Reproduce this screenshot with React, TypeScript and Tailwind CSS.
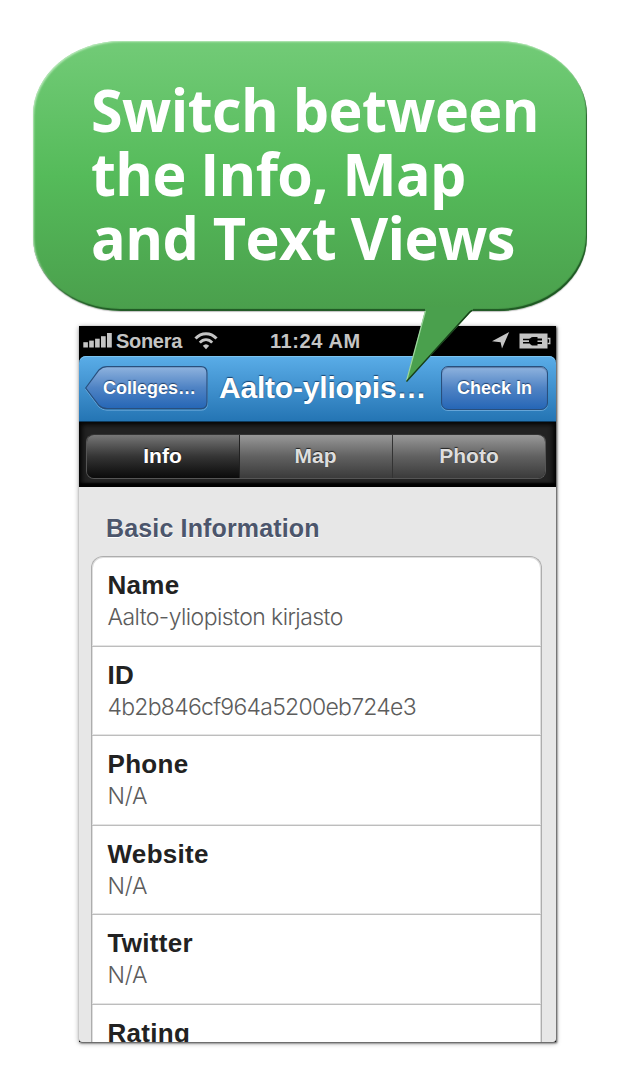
import type { ReactNode } from "react";

const rows = [
  { label: "Name", value: "Aalto-yliopiston kirjasto", track: "tracking-[-0.57px]" },
  { label: "ID", value: "4b2b846cf964a5200eb724e3", track: "tracking-[-0.73px]" },
  { label: "Phone", value: "N/A", track: "tracking-[-0.2px]" },
  { label: "Website", value: "N/A", track: "tracking-[-0.2px]" },
  { label: "Twitter", value: "N/A", track: "tracking-[-0.2px]" },
  { label: "Rating", value: "", track: "" },
];

function Bubble() {
  return (
    <div className="relative z-10 ml-[33px] h-[270px] w-[554px] rounded-[88px/74px] bg-linear-to-b from-[#72cb77] via-[#55bb5a] to-[#4a9f4c] shadow-[inset_1px_1px_2px_rgba(215,245,215,0.75),inset_-1px_-2px_1px_rgba(15,60,20,0.75),0_1px_1px_rgba(0,0,0,0.25)]">
      <h1 className="pt-[36px] pl-[58px] font-['Open_Sans','Noto_Sans',sans-serif] text-[59px] leading-[64px] font-bold tracking-[-0.6px] text-white">
        <span className="block w-max origin-left scale-x-[0.975] whitespace-nowrap">Switch between</span>
        <span className="block w-max origin-left scale-x-[0.973] whitespace-nowrap">the Info, Map</span>
        <span className="block w-max origin-left scale-x-[0.977] whitespace-nowrap">and Text Views</span>
      </h1>
      <svg className="absolute top-[266px] left-[367px]" width="78" height="78" viewBox="0 0 78 78">
        <path d="M25 0 L25 4 L6 75 L72 4 L74 0 Z" fill="#4aa04d" />
        <path d="M25.4 4 L6.5 74" stroke="#9ed69f" strokeWidth="1.2" fill="none" />
        <path d="M72 3.4 Q70 4.4 67 8 L6.5 74.5" stroke="#173f19" strokeWidth="1.4" fill="none" />
      </svg>
    </div>
  );
}

function StatusBar() {
  return (
    <div className="flex h-[30px] items-center bg-black text-[20px] leading-[30px] font-bold text-[#c4c4c4]">
      <svg className="ml-[4px] h-[18px]" width="29" height="18" viewBox="0 0 29 18" fill="#c4c4c4">
        <rect x="0.3" y="10.2" width="4.6" height="5.3" />
        <rect x="6.2" y="8.6" width="4.6" height="6.9" />
        <rect x="12.1" y="6.7" width="4.6" height="8.8" />
        <rect x="18" y="4.2" width="4.7" height="11.3" />
        <rect x="24" y="1" width="4.8" height="14.5" />
      </svg>
      <span className="ml-[4px] w-[78px] tracking-[-0.3px]">Sonera</span>
      <svg width="24" height="18" viewBox="0 0 24 18" fill="none" stroke="#c4c4c4">
        <path d="M1.5 6.5 C7.5 0 16.5 0 22.5 6.5" strokeWidth="3" />
        <path d="M5.8 10.6 C9.5 6.6 14.5 6.6 18.2 10.6" strokeWidth="2.8" />
        <path d="M8.8 13.8 Q12 10.6 15.2 13.8 L12 17.2 Z" fill="#c4c4c4" stroke="none" />
      </svg>
      <span className="ml-[52px] tracking-[0.6px] whitespace-nowrap">11:24 AM</span>
      <svg className="ml-auto" width="18" height="18" viewBox="0 0 18 18" fill="#c4c4c4">
        <path d="M17.2 0 L10 16.5 L8.6 10.2 L0 9.3 Z" />
      </svg>
      <svg className="mr-[5px] ml-[9px]" width="32" height="16" viewBox="0 0 32 16">
        <rect x="0.5" y="0.5" width="28" height="15" fill="#c4c4c4" />
        <path d="M28.5 5.5 H30.8 V10.5 H28.5" fill="none" stroke="#c4c4c4" strokeWidth="1.3" />
        <path d="M4 5.8 H10 C11.5 5.8 11.5 4 14 4 H18.5 V5.4 H23 V7.4 H18.5 V9 H23 V11 H18.5 V12.4 H14 C11.5 12.4 11.5 10.4 10 10.4 H4 Z" fill="#000" />
        <path d="M4 8.1 H10" stroke="#c4c4c4" strokeWidth="1.6" />
      </svg>
    </div>
  );
}

function NavBar() {
  return (
    <div className="bg-black">
      <div className="flex h-[66px] rounded-t-[7px] border-b border-[#0d3b5e] bg-linear-to-b from-[#5aade8] to-[#2475b4] pt-[10px] font-bold text-white shadow-[inset_0_1px_0_#7cc4f0] [text-shadow:0_-1px_1px_rgba(0,25,60,0.65)]">
        <div className="relative ml-[6px] h-[44px] w-[123px]">
          <svg className="absolute inset-0" width="123" height="46" viewBox="0 0 123 46">
            <defs>
              <linearGradient id="back" x1="0" y1="0" x2="0" y2="1">
                <stop offset="0" stopColor="#8fb3de" />
                <stop offset=".5" stopColor="#4f83c4" />
                <stop offset="1" stopColor="#2566b6" />
              </linearGradient>
            </defs>
            <path d="M.7 23.5 L14 5 Q17.5 1.7 22 1.7 H116 Q122.3 1.7 122.3 8 V38 Q122.3 44.2 116 44.2 H22 Q17.5 44.2 14 41 Z" fill="none" stroke="#7fb6e2" strokeOpacity=".7" />
            <path d="M.7 22 L14 4 Q17.5 .7 22 .7 H116 Q122 .7 122 7 V36 Q122 42.7 116 42.7 H22 Q17.5 42.7 14 39.5 Z" fill="url(#back)" stroke="#284f7d" strokeWidth="1.2" />
          </svg>
          <span className="relative block pl-[18px] text-[18px] leading-[44px]">Colleges…</span>
        </div>
        <div className="w-[233px] pl-[11px] text-[30px] leading-[44px] tracking-[-0.2px] whitespace-nowrap">Aalto-yliopis…</div>
        <div className="h-[44px] w-[107px] rounded-[7px] border border-[#284f7d] bg-linear-to-b from-[#8fb3de] via-[#4f83c4] to-[#2566b6] text-center text-[18px] leading-[42px] shadow-[0_1px_0_rgba(127,182,226,0.7),inset_0_1px_1px_rgba(20,40,80,0.4)]">
          Check In
        </div>
      </div>
    </div>
  );
}

function Segment({ children, className }: { children: ReactNode; className: string }) {
  return <div className={`h-full text-center ${className}`}>{children}</div>;
}

function Segments() {
  return (
    <div className="h-[65px] bg-[#222] px-[7px] pt-[12px] shadow-[inset_0_-4px_2px_#000,inset_3px_2px_5px_#050505,inset_-3px_0_5px_#050505]">
      <div className="flex h-[45px] w-[460px] overflow-hidden rounded-[8px] border border-[#555] border-t-[#333] text-[21px] leading-[42px] font-bold text-[#dedede] [text-shadow:0_-1px_1px_rgba(0,0,0,0.7)]">
        <Segment className="w-[153px] border-r border-[#222] bg-linear-to-b from-[#777] via-[#353535] to-[#0b0b0b] pr-px text-white">Info</Segment>
        <Segment className="w-[153px] border-r border-[#333] bg-linear-to-b from-[#999] via-[#616161] to-[#3b3b3b] pr-px">Map</Segment>
        <Segment className="flex-1 bg-linear-to-b from-[#999] via-[#616161] to-[#3b3b3b]">Photo</Segment>
      </div>
    </div>
  );
}

export default function App() {
  return (
    <main className="h-[1081px] w-[640px] overflow-hidden bg-white pt-[41px] font-['Liberation_Sans',Arial,sans-serif]">
      <Bubble />
      <div className="mt-[15px] ml-[79px] w-[477px] bg-black shadow-[1px_1px_2px_rgba(0,0,0,0.65),0_1px_5px_rgba(0,0,0,0.4)]">
        <div className="h-[716px] overflow-hidden rounded-b-[3px] bg-[#e7e7e7]">
          <StatusBar />
          <NavBar />
          <Segments />
          <h2 className="mt-[23px] ml-[27px] h-[46px] text-[25px] leading-[36px] font-bold tracking-[0.15px] text-[#4c566c] [text-shadow:0_1px_0_#fff]">
            Basic Information
          </h2>
          <div className="ml-[12px] w-[451px] rounded-t-[12px] border border-b-0 border-[#adadad] bg-white shadow-[inset_0_0_0_1px_#dedede]">
            {rows.map((row) => (
              <div key={row.label} className="h-[89.5px] border-b border-[#bdbdbd] pt-[12px] pl-[15.5px] shadow-[0_-1px_0_#e4e4e4_inset] first:shadow-[0_-1px_0_#e4e4e4_inset]">
                <div className="h-[32px] text-[26px] leading-[32px] font-bold tracking-[0.3px] text-[#222]">{row.label}</div>
                <div className={`font-[Inter,sans-serif] text-[23px] leading-[32px] font-light whitespace-nowrap text-[#5c5c5c] ${row.track}`}>{row.value}</div>
              </div>
            ))}
          </div>
        </div>
      </div>
    </main>
  );
}
